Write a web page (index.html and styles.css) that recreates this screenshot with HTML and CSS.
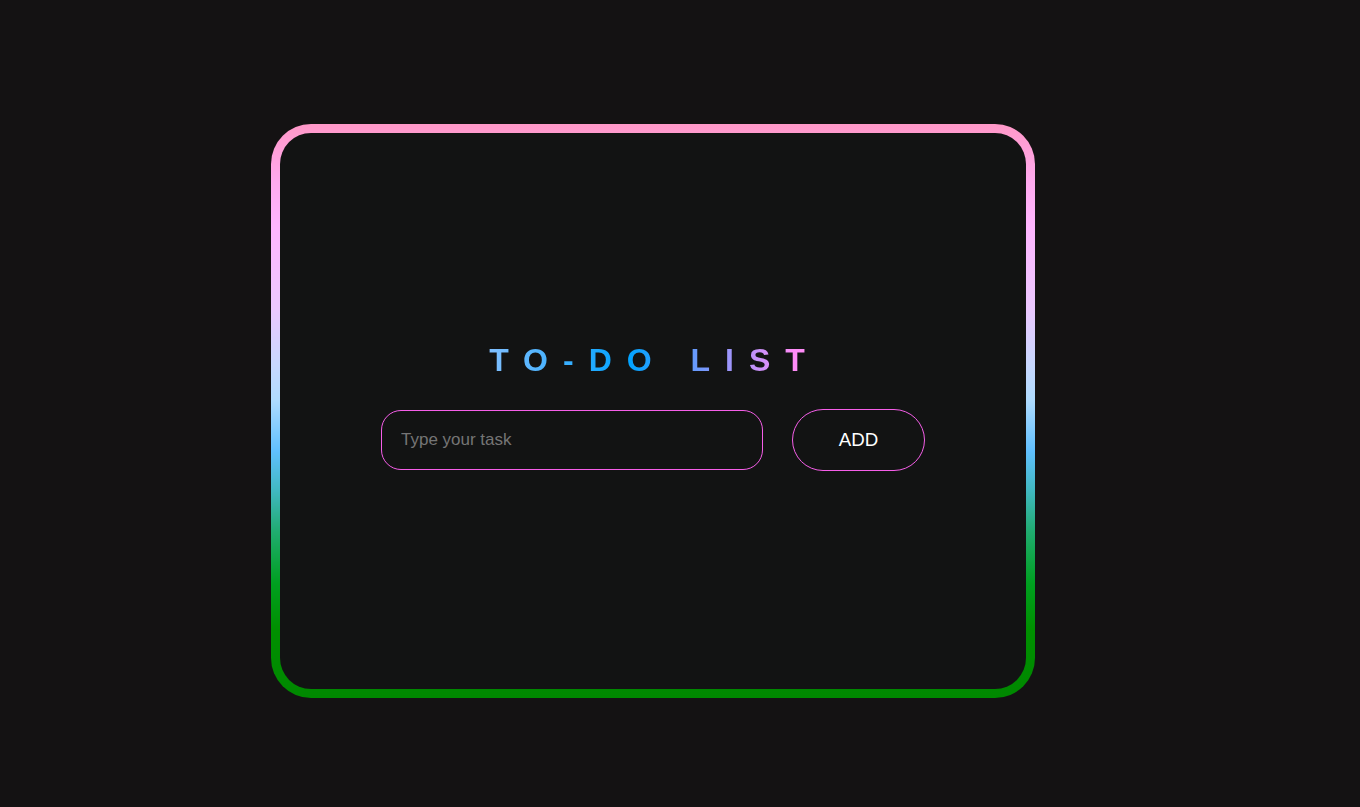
FILE: index.html
```html
<!DOCTYPE html>
<html lang="en">
<head>
<meta charset="utf-8">
<title>To-Do List</title>
<link rel="stylesheet" href="styles.css">
</head>
<body>
<main class="page">
  <section class="card">
    <h1 class="title">TO-DO LIST</h1>
    <form class="row" onsubmit="return false">
      <input class="task-input" type="text" placeholder="Type your task">
      <button class="add-btn" type="submit">ADD</button>
    </form>
  </section>
</main>
</body>
</html>
```
FILE: styles.css
```css
html, body {
  margin: 0;
  padding: 0;
  background: #141213;
  font-family: "Liberation Sans", Arial, sans-serif;
}

.page {
  min-height: 807px;
  box-sizing: border-box;
  padding: 124px 0 0 271px;
}

.card {
  box-sizing: border-box;
  width: 764px;
  height: 574px;
  border: 9px solid transparent;
  border-radius: 40px;
  background:
    linear-gradient(#121313, #121313) padding-box,
    linear-gradient(to bottom,
      #ff98c8 0%,
      #ffaaee 10%,
      #ffb6ff 18%,
      #ecc8ff 32%,
      #c8d8ff 42%,
      #b0dcff 48%,
      #60c0ff 57%,
      #40b8c0 64%,
      #20ac70 71%,
      #00a020 80%,
      #009000 88%,
      #008800 100%) border-box;
  display: flex;
  flex-direction: column;
  align-items: center;
  padding-top: 209px;
}

.title {
  display: inline-block;
  margin: 0 0 30px 3px;
  font-size: 32px;
  font-weight: bold;
  letter-spacing: 15px;
  line-height: 37px;
  background: linear-gradient(to right, #80bfff 0%, #00a3ff 42%, #ff8cf8 92%, #ff8cf8 100%);
  -webkit-background-clip: text;
  background-clip: text;
  color: transparent;
}

.row {
  display: flex;
  align-items: center;
  gap: 29px;
  margin: 0;
}

.task-input {
  box-sizing: border-box;
  width: 382px;
  height: 60px;
  border: 1px solid #f55ee8;
  border-radius: 20px;
  background: transparent;
  padding: 0 19px;
  font-family: "Liberation Sans", Arial, sans-serif;
  font-size: 17px;
  color: #e0e0e0;
  outline: none;
}

.task-input::placeholder {
  color: #757575;
}

.add-btn {
  box-sizing: border-box;
  width: 133px;
  height: 62px;
  border: 1px solid #f55ee8;
  border-radius: 31px;
  background: transparent;
  color: #ffffff;
  font-family: "Liberation Sans", Arial, sans-serif;
  font-size: 18.7px;
  cursor: pointer;
}
```
